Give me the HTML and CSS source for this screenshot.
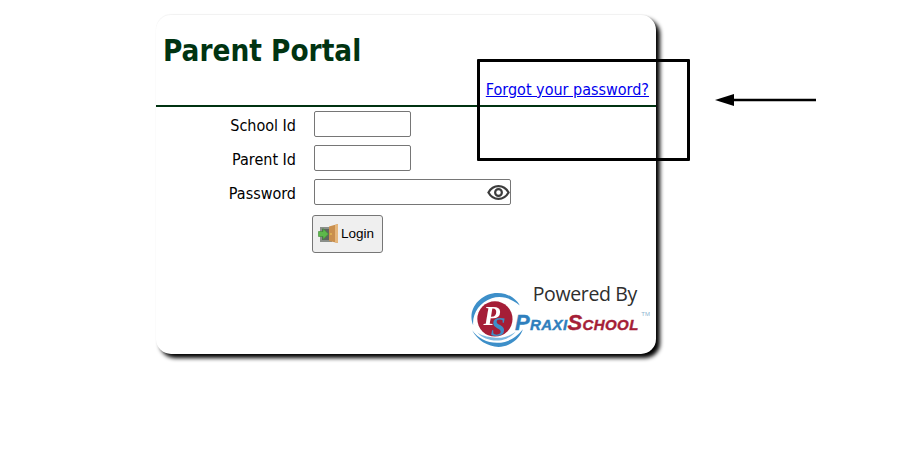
FILE: index.html
```html
<!DOCTYPE html>
<html lang="en">
<head>
<meta charset="utf-8">
<title>Parent Portal</title>
<link rel="stylesheet" href="styles.css">
</head>
<body>
<main class="card">
  <header class="card-head">
    <h1 class="title">Parent Portal</h1>
    <div class="forgot-row"><a class="forgot" href="#">Forgot your password?</a></div>
  </header>
  <form class="form">
    <label class="label" for="school">School Id</label>
    <input class="field" id="school" type="text">
    <label class="label" for="parent">Parent Id</label>
    <input class="field" id="parent" type="text">
    <label class="label" for="pass">Password</label>
    <div class="pass-wrap">
      <input class="field field-pass" id="pass" type="password">
      <svg class="eye" viewBox="0 0 24 24" width="23" height="23" aria-hidden="true">
        <path d="M1.5 12C4 7.6 7.8 5.4 12 5.4S20 7.6 22.5 12C20 16.4 16.2 18.6 12 18.6S4 16.4 1.5 12Z" fill="none" stroke="#3c3c3c" stroke-width="2.3"/>
        <circle cx="12" cy="12" r="3.5" fill="none" stroke="#3c3c3c" stroke-width="2.3"/>
      </svg>
    </div>
    <button class="login" type="button">
      <svg class="door" viewBox="0 0 21 21" width="21" height="21" aria-hidden="true">
        <rect x="2" y="4" width="12" height="15" fill="#8a8f8a"/>
        <rect x="4" y="6" width="8" height="11" fill="#5f655f"/>
        <path d="M11 3.5L20 1V20L11 18Z" fill="#c98f4e"/>
        <path d="M17 2V19.2L20 20V1Z" fill="#e6b77c"/>
        <circle cx="13" cy="11" r="0.8" fill="#f5d65a"/>
        <path d="M0.5 8.5H5V5.5L10.5 11L5 16.5V13.5H0.5Z" fill="#5db84a" stroke="#3d8a33" stroke-width="0.6"/>
      </svg>
      <span>Login</span>
    </button>
  </form>
  <footer class="brand">
    <div class="powered">Powered By</div>
    <div class="logo">
      <svg class="logo-mark" viewBox="0 0 56 56" width="58" height="58" aria-hidden="true">
        <path d="M5 33C-1 19 10 4 26 2C36 1 46 6 50 14C42 7 32 4 23 7C11 11 4 22 5 33Z" fill="#3d8fc9"/>
        <path d="M4 38C10 50 26 58 39 52C47 48 51 43 53 37C47 45 38 50 28 50C18 50 10 46 4 38Z" fill="#3d8fc9"/>
        <path d="M9 40C15 47 27 50 37 46C41 44 44 42 46 39C40 44 32 46 25 45C18 44 13 43 9 40Z" fill="#7fb9e0"/>
        <circle cx="26" cy="27" r="17" fill="#a51e37"/>
        <text class="logo-p" x="15" y="33">P</text>
        <text class="logo-s" x="22" y="43">S</text>
      </svg>
      <span class="logo-word"><span class="praxi">Praxi</span><span class="school">School</span></span>
      <span class="tm">TM</span>
    </div>
  </footer>
</main>
<div class="callout" aria-hidden="true"></div>
<svg class="arrow" viewBox="0 0 102 14" width="102" height="14" aria-hidden="true">
  <path d="M19 7H101" stroke="#000" stroke-width="2.4"/>
  <path d="M0 7L19 1V13Z" fill="#000"/>
</svg>
</body>
</html>
```
FILE: styles.css
```css
* { box-sizing: border-box; }
html, body { margin: 0; padding: 0; }
body {
  position: relative;
  width: 898px;
  height: 462px;
  overflow: hidden;
  background: #fff;
  font-family: "DejaVu Sans Condensed", "DejaVu Sans", Verdana, sans-serif;
  font-stretch: condensed;
  color: #000;
}
.card {
  width: 500px;
  height: 339px;
  margin: 15px 0 0 156px;
  background: #fff;
  border-radius: 15px;
  box-shadow: 4px 4px 4px #000, 0 -1px 1px #f4f4f4;
  display: flex;
  flex-direction: column;
}
.card-head {
  height: 92px;
  border-bottom: 2px solid #003311;
  padding: 0 7px;
}
.title {
  margin: 0;
  padding-top: 18px;
  font-size: 29.4px;
  line-height: 36px;
  font-weight: 700;
  color: #003311;
}
.forgot-row { text-align: right; margin-top: 11px; }
.forgot { font-size: 16px; line-height: 20px; color: #00e; text-decoration: underline; }
.form {
  display: grid;
  grid-template-columns: 140px 197px;
  column-gap: 18px;
  row-gap: 8px;
  align-items: center;
  padding-top: 4px;
}
.label { text-align: right; font-size: 16px; color: #000; padding-top: 2px; }
.field {
  width: 97px;
  height: 26px;
  border: 1px solid #767676;
  border-radius: 2px;
  background: #fff;
  padding: 0 2px;
}
.pass-wrap { position: relative; width: 197px; height: 26px; }
.field-pass { width: 197px; }
.eye { position: absolute; right: 1px; top: 2px; }
.login {
  grid-column: 2;
  margin: 2px 0 0 -2px;
  width: 71px;
  height: 38px;
  display: flex;
  align-items: center;
  gap: 2px;
  padding: 0 0 2px 5px;
  background: #efefef;
  border: 1px solid #767676;
  border-radius: 3px;
  font-family: "Liberation Sans", Arial, sans-serif;
  font-size: 13.5px;
  color: #000;
}
.door { flex: none; }
.brand {
  margin-top: auto;
  align-self: flex-end;
  width: 172px;
  margin-right: 14px;
  margin-bottom: 5px;
  display: flex;
  flex-direction: column;
}
.powered {
  font-family: "Open Sans", sans-serif;
  font-stretch: normal;
  font-size: 19.5px;
  line-height: 24px;
  letter-spacing: -0.35px;
  color: #2e2e2e;
  text-align: right;
  padding-right: 5px;
  margin-bottom: -15px;
}
.logo { display: flex; align-items: center; position: relative; height: 58px; }
.logo-mark { flex: none; margin-left: -2px; filter: blur(0.4px); }
.logo-p { font: italic 700 26px "Liberation Serif", serif; fill: #fff; }
.logo-s { font: italic 700 26px "Liberation Serif", serif; fill: #3d8fc9; }
.logo-word {
  margin-left: -11px;
  margin-top: 6px;
  font: italic 900 22px "Liberation Sans", Arial, sans-serif;
  font-variant: small-caps;
  letter-spacing: 0.4px;
  white-space: nowrap;
  -webkit-text-stroke: 0.4px currentColor;
}
.praxi { color: #2f7fbd; }
.school { color: #a51e37; }
.tm { position: absolute; right: -8px; top: 20px; font: 6px "Liberation Sans", Arial, sans-serif; color: #8fb4d0; }
.callout {
  position: absolute;
  left: 477px;
  top: 59px;
  width: 213px;
  height: 102px;
  border: 3px solid #000;
  border-radius: 1px;
}
.arrow { position: absolute; left: 715px; top: 93px; }
```
